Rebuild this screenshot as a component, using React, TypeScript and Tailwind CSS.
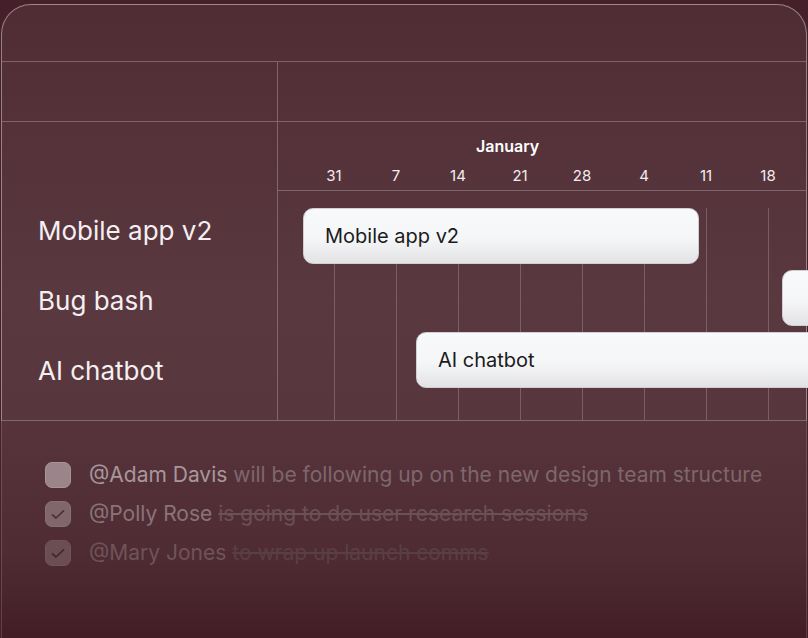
import React from "react";

const dates = ["31", "7", "14", "21", "28", "4", "11", "18"];

function Check({ color }: { color: string }) {
  return (
    <svg width="14" height="11" viewBox="0 0 14 11" fill="none" style={{ color }}>
      <path d="M1.5 5.8 L5 9 L12.5 1.8" stroke="currentColor" strokeWidth="1.7" strokeLinecap="round" strokeLinejoin="round" />
    </svg>
  );
}

function Bar({ label, className }: { label: string; className: string }) {
  return (
    <div
      className={`absolute h-[56px] rounded-[10px] border border-[#cfcfd3] bg-linear-to-b from-[#f8f9fb] via-[#f5f6f8] via-55% to-[#e3e3e6] flex items-center pl-[21px] text-[20px] text-[#1b1b1d] whitespace-nowrap ${className}`}
    >
      {label}
    </div>
  );
}

export default function App() {
  return (
    <div className="w-[808px] h-[638px] overflow-hidden bg-[#45202a] pt-[4px] px-[1px] font-['Inter','Noto_Sans',sans-serif]">
      <div className="rounded-t-[30px] border-x border-t border-white/40 bg-linear-to-b from-[#502d35] via-[#5a3840] via-70% to-[#58363e]">
        <div className="h-[57px] border-b border-white/25" />
        <div className="flex h-[60px] border-b border-white/25">
          <div className="w-[276px] border-r border-white/25" />
        </div>
        <div className="flex h-[299px] border-b border-white/25">
          <div className="w-[276px] shrink-0 border-r border-white/25 pl-[36px] pt-[91px] flex flex-col gap-[34px] text-[26px] leading-[36px] text-[#f5eff1]">
            <div>Mobile app v2</div>
            <div>Bug bash</div>
            <div>AI chatbot</div>
          </div>
          <div className="flex-1 flex flex-col">
            <div className="h-[69px] shrink-0 border-b border-white/25 pt-[14px]">
              <div className="pl-[198px] text-[16px] leading-[20px] font-semibold text-white">January</div>
              <div className="mt-[10px] flex pl-[25px] text-[15px] leading-[20px] text-[#f3ecee]">
                {dates.map((d) => (
                  <div key={d} className="w-[62px] shrink-0 text-center">
                    {d}
                  </div>
                ))}
              </div>
            </div>
            <div className="relative flex-1 flex pl-[25px] pt-[17px]">
              {dates.map((d) => (
                <div key={d} className="w-[62px] shrink-0 flex justify-center">
                  <div className="w-px bg-white/20" />
                </div>
              ))}
              <Bar label="Mobile app v2" className="left-[25px] top-[17px] w-[396px]" />
              <Bar label="" className="left-[504px] top-[79px] w-[120px]" />
              <Bar label="AI chatbot" className="left-[138px] top-[141px] w-[420px]" />
            </div>
          </div>
        </div>
      </div>
      <div className="h-[217px] border-x border-white/15 bg-linear-to-b from-[#57343c] via-[#4f2c34] via-60% to-[#421d25] pt-[41px] pl-[43px] flex flex-col gap-[13px] text-[21px] leading-[26px] whitespace-nowrap">
        <div className="flex items-center gap-[18px] h-[26px]">
          <div className="w-[26px] h-[26px] shrink-0 rounded-[7px] bg-[#9b858a] border border-[#a8959a]" />
          <div>
            <span className="text-[#a8979b]">@Adam Davis</span>{" "}
            <span className="text-[#7e676c]">will be following up on the new design team structure</span>
          </div>
        </div>
        <div className="flex items-center gap-[18px] h-[26px]">
          <div className="w-[26px] h-[26px] shrink-0 rounded-[7px] bg-[#80676c] border border-[#886f74] flex items-center justify-center">
            <Check color="#4f2f37" />
          </div>
          <div>
            <span className="text-[#8a7479]">@Polly Rose</span>{" "}
            <span className="text-[#6b5157] line-through">is going to do user research sessions</span>
          </div>
        </div>
        <div className="flex items-center gap-[18px] h-[26px]">
          <div className="w-[26px] h-[26px] shrink-0 rounded-[7px] bg-[#6a4e54] border border-[#705459] flex items-center justify-center">
            <Check color="#45262e" />
          </div>
          <div>
            <span className="text-[#6e5459]">@Mary Jones</span>{" "}
            <span className="text-[#5a3e45] line-through">to wrap up launch comms</span>
          </div>
        </div>
      </div>
    </div>
  );
}
